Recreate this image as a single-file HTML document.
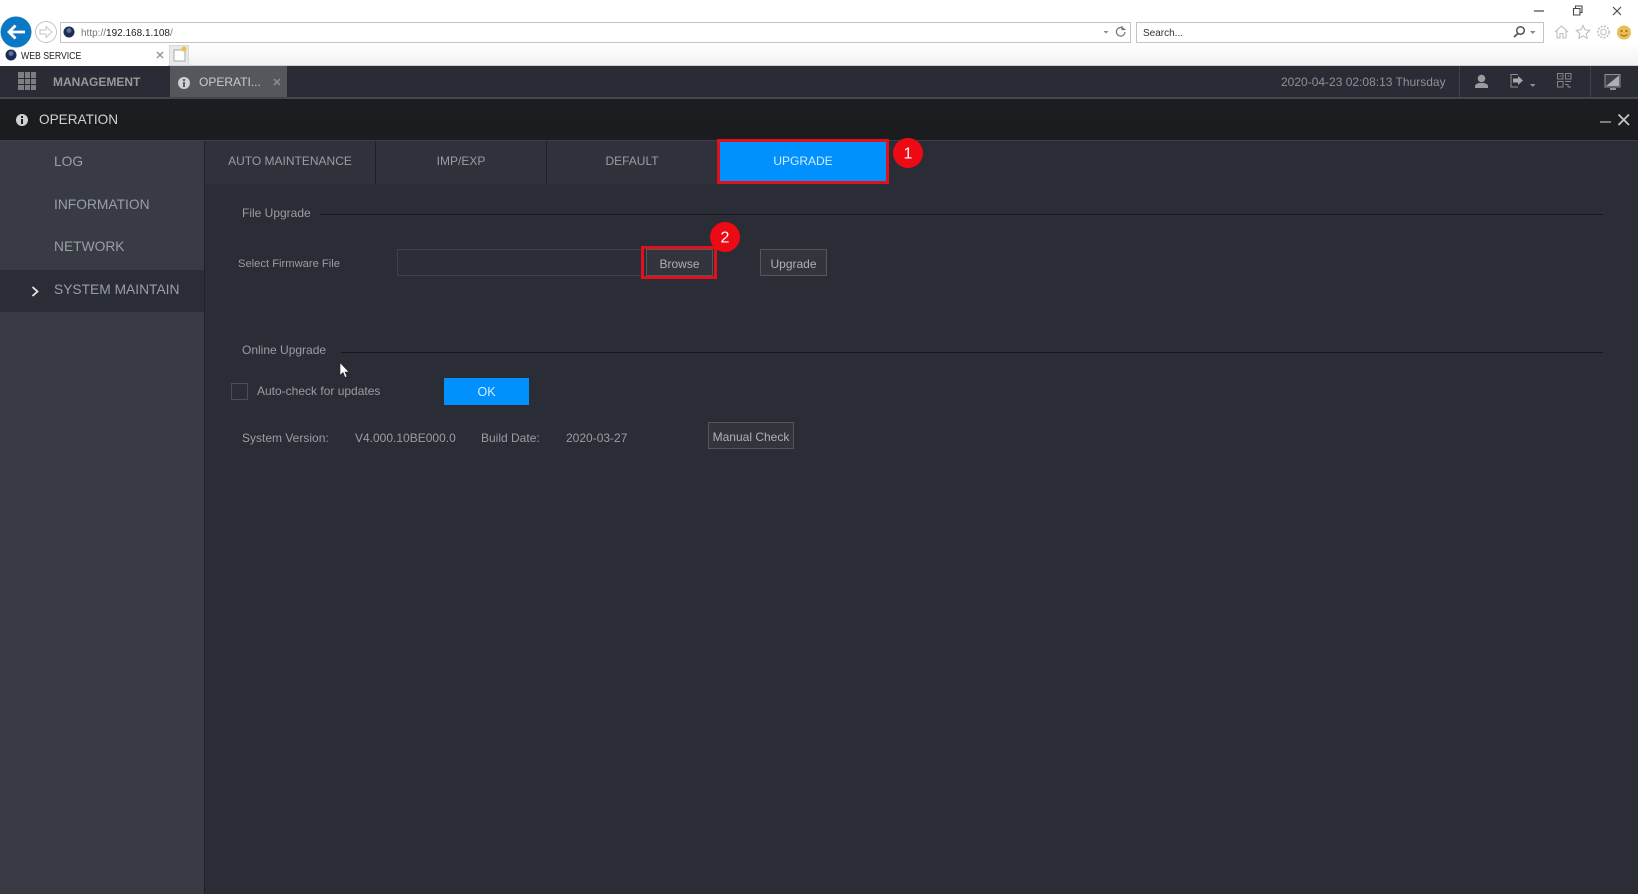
<!DOCTYPE html>
<html><head><meta charset="utf-8"><title>WEB SERVICE</title>
<style>
html,body{margin:0;padding:0;width:1638px;height:894px;overflow:hidden;background:#2a2d36;font-family:"Liberation Sans",sans-serif}
div,span{position:absolute;box-sizing:border-box;white-space:nowrap}
svg{position:absolute;left:0;top:0}
.t{line-height:20px;height:20px;transform-origin:left center}
.tab{top:141px;height:43px;background:#2f323a;border-right:1px solid #1d1f25;color:#9a9da2;font-size:12px;line-height:41px;text-align:center}
.side{left:54px;color:#9b9ea5;font-size:13.8px;line-height:20px;height:20px}
.btn{border:1px solid #54565c;background:#33353c;color:#aeb0b4;font-size:12px;text-align:center}
.lb{color:#9a9da2;font-size:12px;line-height:20px;height:20px}
</style></head><body>
<!-- browser chrome -->
<div style="left:0;top:0;width:1638px;height:66px;background:#fff"></div>
<div style="left:188px;top:44px;width:1450px;height:22px;background:linear-gradient(#fff,#f1f1f1)"></div>
<div style="left:0;top:65px;width:1638px;height:1px;background:#d0d0d0"></div>
<div style="left:60px;top:22px;width:1071px;height:21px;border:1px solid #c4c4c4;background:#fff"></div>
<div style="left:1136px;top:22px;width:408px;height:21px;border:1px solid #c4c4c4;background:#fff"></div>
<div class="t" style="left:81px;top:23px;font-size:10px;color:#777;line-height:21px">http://<span style="position:static;color:#222">192.168.1.108</span>/</div>
<div class="t" style="left:1143px;top:23px;font-size:10px;color:#333;line-height:21px">Search...</div>
<div style="left:0;top:44px;width:168px;height:22px;background:#fff"></div>
<div class="t" style="left:21px;top:46px;font-size:10px;color:#222;transform:scaleX(.87);line-height:21px">WEB SERVICE</div>
<div style="left:169px;top:45px;width:20px;height:21px;background:#e9e9e9;border:1px solid #d8d8d8"></div>
<svg width="1638" height="894" viewBox="0 0 1638 894">
<circle cx="16" cy="32" r="15.5" fill="#0a78c4"/>
<path d="M25 32H9.500M15.500 25.500L9 32l6.500 6.500" fill="none" stroke="#fff" stroke-width="2.800"/>
<circle cx="46" cy="32" r="10.500" fill="#fff" stroke="#c4c4c4"/>
<path d="M40 30h6v-3.500l6 5.500-6 5.500V34h-6z" fill="none" stroke="#c4c4c4"/>
<circle cx="69" cy="32" r="5.500" fill="#1d2c50"/><circle cx="69" cy="30.500" r="2.500" fill="#5a6f9a"/>
<circle cx="11" cy="55" r="5.500" fill="#1d2c50"/><circle cx="11" cy="53.500" r="2.500" fill="#5a6f9a"/>
<path d="M157 52l6 6M163 52l-6 6" stroke="#999" stroke-width="1.500"/>
<path d="M174 50h11v11h-11z" fill="#fff" stroke="#aaa"/><circle cx="184" cy="49" r="2.500" fill="#f0c040"/>
<path d="M1103.500 31h5l-2.500 2.500z" fill="#888"/>
<path d="M1124 29a4.300 4.300 0 1 0 1 3M1122 26v3.500h3.500" fill="none" stroke="#777" stroke-width="1.200"/>
<circle cx="1520.500" cy="30.500" r="3.800" fill="none" stroke="#555" stroke-width="1.500"/><path d="M1517.800 33.500l-3.800 3.500" stroke="#555" stroke-width="1.800"/>
<path d="M1530 31h5.500l-2.750 3z" fill="#888"/>
<path d="M1534 11h10" stroke="#444" stroke-width="1.200"/>
<path d="M1573.500 8.500h6.500v6.500h-6.500zM1575.500 8.500v-2.500h6.500v6.500h-2" fill="none" stroke="#444" stroke-width="1.100"/>
<path d="M1613 7l8 8M1621 7l-8 8" stroke="#444" stroke-width="1.100"/>
<path d="M1555 32l6.500-6 6.500 6M1557 30.500V38h3v-4.500h3V38h3v-7.500" fill="none" stroke="#bcc0c2" stroke-width="1.100"/>
<path d="M1583 25.500l2 4.300 4.700.6-3.500 3.200 1 4.700-4.200-2.400-4.200 2.400 1-4.700-3.500-3.200 4.700-.6z" fill="none" stroke="#bcc0c2" stroke-width="1.100"/>
<circle cx="1603.500" cy="32" r="2.800" fill="none" stroke="#bcc0c2"/><circle cx="1603.500" cy="32" r="5.700" fill="none" stroke="#bcc0c2" stroke-width="1.600" stroke-dasharray="2 1.400"/>
<circle cx="1624" cy="32.500" r="7" fill="#ecbd55"/><circle cx="1621.500" cy="31" r="1" fill="#8a6a20"/><circle cx="1626.500" cy="31" r="1" fill="#8a6a20"/><path d="M1620.500 34.500q3.500 3 7 0" fill="none" stroke="#8a6a20"/>
</svg>

<!-- app toolbar -->
<div style="left:0;top:66px;width:1638px;height:31px;background:#2a2c35"></div>
<div style="left:0;top:97px;width:1638px;height:2px;background:#45474d"></div>
<div style="left:170px;top:66px;width:117px;height:31px;background:#55575d"></div>
<div style="left:18px;top:72px;width:18px;height:18px;background-image:linear-gradient(#2a2c35,#2a2c35),linear-gradient(#2a2c35,#2a2c35),linear-gradient(#2a2c35,#2a2c35),linear-gradient(#2a2c35,#2a2c35);background-size:1px 18px,1px 18px,18px 1px,18px 1px;background-position:5.500px 0,11.500px 0,0 5.500px,0 11.500px;background-repeat:no-repeat;background-color:#7d7e82"></div>
<div class="t" style="left:53px;top:72px;font-size:12px;font-weight:bold;color:#97989c">MANAGEMENT</div>
<div class="t" style="left:199px;top:72px;font-size:12px;color:#c9cacc">OPERATI...</div>
<div class="t" style="left:1281px;top:72px;font-size:12px;color:#8f9196">2020-04-23 02:08:13 Thursday</div>
<div style="left:1459px;top:66px;width:1px;height:31px;background:#41434a"></div>
<div style="left:1590px;top:66px;width:1px;height:31px;background:#41434a"></div>

<!-- title bar -->
<div style="left:0;top:99px;width:1638px;height:41px;background:linear-gradient(#1c1d20,#1a1c1f)"></div>
<div style="left:0;top:140px;width:1638px;height:1px;background:#3c3f47"></div>
<div class="t" style="left:39px;top:110px;font-size:13.6px;color:#d0d1d3">OPERATION</div>

<!-- sidebar -->
<div style="left:0;top:141px;width:204px;height:753px;background:#383b44"></div>
<div style="left:204px;top:141px;width:1px;height:753px;background:#1f2127"></div>
<div style="left:0;top:270px;width:204px;height:42px;background:#2a2d36"></div>
<div class="side" style="top:152px">LOG</div>
<div class="side" style="top:195px">INFORMATION</div>
<div class="side" style="top:237px">NETWORK</div>
<div class="side" style="top:280px">SYSTEM MAINTAIN</div>

<!-- tabs -->
<div class="tab" style="left:205px;width:171px">AUTO MAINTENANCE</div>
<div class="tab" style="left:376px;width:171px">IMP/EXP</div>
<div class="tab" style="left:547px;width:171px">DEFAULT</div>
<div style="left:717px;top:139px;width:172px;height:45px;background:#0091ff;border:3px solid #e0101c;color:#d4ecff;font-size:12px;line-height:39px;text-align:center">UPGRADE</div>

<!-- file upgrade -->
<div class="lb" style="left:242px;top:203px">File Upgrade</div>
<div style="left:320px;top:214px;width:1283px;height:1px;background:#14161b"></div>
<div class="lb" style="left:238px;top:254px;font-size:11.2px">Select Firmware File</div>
<div style="left:397px;top:249px;width:246px;height:27px;border:1px solid #3f4149;background:#2b2e37"></div>
<div style="left:641px;top:246px;width:76px;height:33px;border:3px solid #e0101c"></div>
<div class="btn" style="left:646px;top:249px;width:67px;height:27px;line-height:29px">Browse</div>
<div class="btn" style="left:760px;top:249px;width:67px;height:27px;line-height:29px">Upgrade</div>

<!-- online upgrade -->
<div class="lb" style="left:242px;top:340px">Online Upgrade</div>
<div style="left:341px;top:352px;width:1262px;height:1px;background:#14161b"></div>
<div style="left:231px;top:383px;width:17px;height:17px;border:1px solid #4b4d54"></div>
<div class="lb" style="left:257px;top:381px">Auto-check for updates</div>
<div style="left:444px;top:378px;width:85px;height:27px;background:#0091ff;color:#d8eeff;font-size:12.5px;line-height:29px;text-align:center">OK</div>
<div class="lb" style="left:242px;top:428px">System Version:</div>
<div class="lb" style="left:355px;top:428px">V4.000.10BE000.0</div>
<div class="lb" style="left:481px;top:428px">Build Date:</div>
<div class="lb" style="left:566px;top:428px">2020-03-27</div>
<div class="btn" style="left:708px;top:422px;width:86px;height:27px;line-height:28px">Manual Check</div>

<!-- overlays -->
<svg width="1638" height="894" viewBox="0 0 1638 894">
<circle cx="184" cy="83" r="6" fill="#cfd0d2"/><rect x="183" y="82" width="2" height="5" fill="#55575d"/><rect x="183" y="79" width="2" height="2" fill="#55575d"/>
<path d="M274 79l6 6M280 79l-6 6" stroke="#8d8e92" stroke-width="1.500"/>
<circle cx="22" cy="120" r="6" fill="#d0d1d3"/><rect x="21" y="119" width="2" height="5" fill="#1c1d20"/><rect x="21" y="116" width="2" height="2" fill="#1c1d20"/>
<circle cx="1481.500" cy="78.500" r="3.800" fill="#999b9f"/><path d="M1475 88v-2q0-2 4-3h5q4 1 4 3v2z" fill="#999b9f"/>
<path d="M1518 74.500h-7v12.500h7" fill="none" stroke="#8e9094"/><path d="M1513 78.500h5v-2.500l5 4.500-5 4.500v-2.500h-5z" fill="#a5a7ab"/>
<path d="M1530 84h5.500l-2.750 3z" fill="#8e9094"/>
<g fill="none" stroke="#84868b"><rect x="1557.500" y="73.500" width="5.500" height="5.500"/><rect x="1565.500" y="73.500" width="5.500" height="5.500"/><rect x="1557.500" y="81.500" width="5.500" height="5.500"/><path d="M1565 81.500h6M1565 84.500h3v2.500h3M1559.500 76h2M1567.500 76h2"/></g>
<rect x="1605" y="74.500" width="15" height="12.500" fill="#3c3e45" stroke="#8e9094"/><path d="M1606 86l13-10.500v10.500z" fill="#aeb0b4"/><path d="M1610 89h6" stroke="#8e9094" stroke-width="2"/>
<path d="M1600 122h11" stroke="#9b9da1" stroke-width="1.500"/>
<path d="M1618.500 114.500l10.500 10.500M1629 114.500l-10.500 10.500" stroke="#c4c5c8" stroke-width="1.800"/>
<path d="M32.500 287l5 4.500-5 4.500" fill="none" stroke="#e8e8ea" stroke-width="1.800"/>
<circle cx="908" cy="153" r="15" fill="#ee0a14"/>
<circle cx="725" cy="237" r="15" fill="#ee0a14"/>
<path d="M340 362.500v13l3-3 2 5 2-1-2-4.500h4z" fill="#fff" stroke="#222" stroke-width="0.600"/>
<text x="908" y="158.500" text-anchor="middle" fill="#fff" font-family="Liberation Sans" font-size="16">1</text>
<text x="725" y="242.500" text-anchor="middle" fill="#fff" font-family="Liberation Sans" font-size="16">2</text>
</svg>
</body></html>
